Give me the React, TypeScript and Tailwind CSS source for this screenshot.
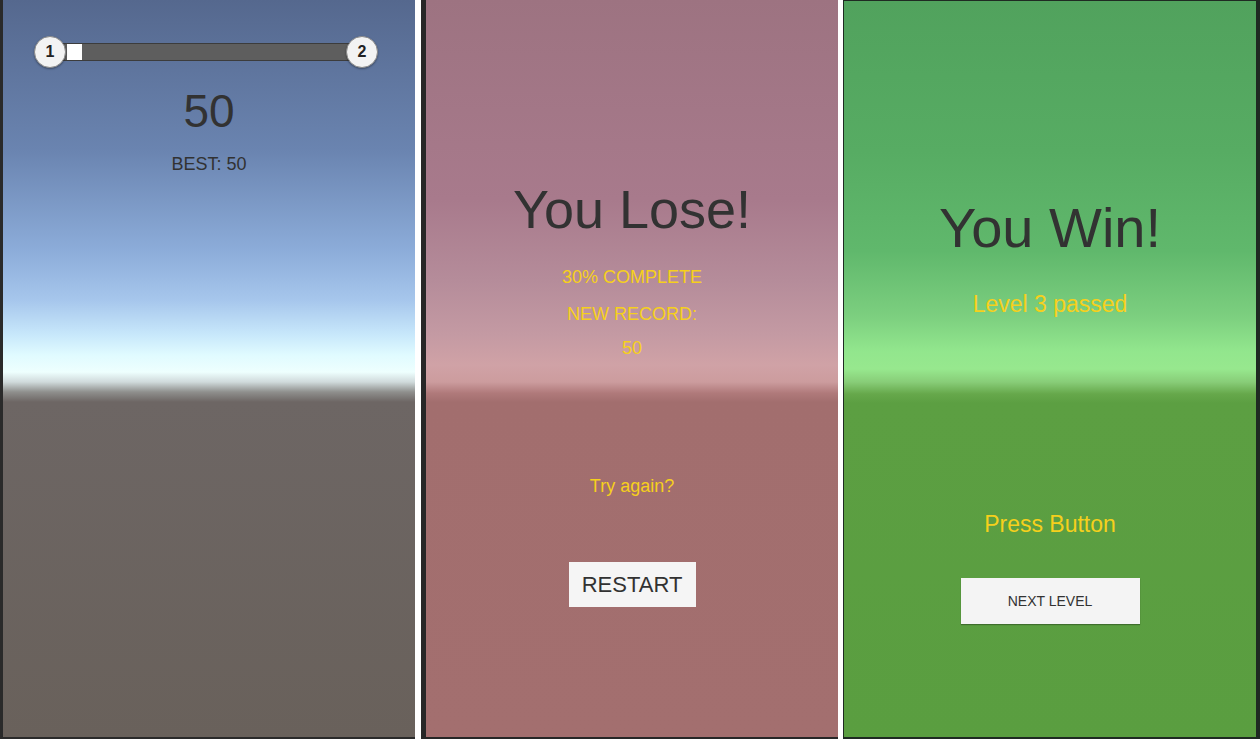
const font = { fontFamily: '"Liberation Sans", Arial, sans-serif' };

const StepCircle = ({ n }: { n: number }) => (
  <div className="relative z-10 flex h-8 w-8 shrink-0 items-center justify-center rounded-full border border-[#8a8a8a] bg-[#f3f3f3] text-[16px] font-bold leading-none text-[#222] shadow-[0_1px_2px_rgba(0,0,0,0.35)]">
    {n}
  </div>
);

const GamePanel = () => (
  <div className="flex h-[739px] w-[415px] shrink-0 flex-col border-b-2 border-l-[3px] border-[#2a2a2a] bg-[linear-gradient(to_bottom,#55688e_0px,#6a84b0_150px,#8cacd9_250px,#a6c6ec_300px,#c8e8fb_335px,#e0fbff_355px,#eefffe_372px,#d0dadb_382px,#8f8f8d_392px,#6d6664_402px,#69615b_739px)]">
    {/* level progress */}
    <div className="ml-[31px] mt-[36px] flex w-[344px] items-center">
      <StepCircle n={1} />
      <div className="-mx-4 flex h-[18px] flex-1 border border-[#3c3c3c] bg-[#5e5e5e]">
        <div className="ml-4 h-full w-[15px] bg-white" />
      </div>
      <StepCircle n={2} />
    </div>
    <div className="mt-[20px] text-center text-[46px] leading-none text-[#323232]">50</div>
    <div className="mt-[21px] text-center text-[18px] leading-none text-[#323232]">BEST: 50</div>
  </div>
);

const LosePanel = () => (
  <div className="flex h-[739px] w-[417px] shrink-0 flex-col items-center border-b-2 border-l-[5px] border-[#272727] bg-[linear-gradient(to_bottom,#9d7381_0px,#a87a8c_200px,#b58c9a_280px,#c49aa3_335px,#d0a2a6_365px,#cc9c9e_382px,#b07a7b_393px,#a26e6e_402px,#a36f6f_739px)]">
    <div className="mt-[182px] text-[54px] leading-none text-[#323232]">You Lose!</div>
    <div className="mt-[32px] text-[18px] leading-none text-[#f6d01c]">30% COMPLETE</div>
    <div className="mt-[19px] text-[18px] leading-none text-[#f6d01c]">NEW RECORD:</div>
    <div className="mt-[16px] text-[18px] leading-none text-[#f6d01c]">50</div>
    <div className="mt-[120px] text-[18px] leading-none text-[#f6d01c]">Try again?</div>
    <button className="mt-[67px] flex h-[45px] w-[127px] items-center justify-center bg-[#f5f5f5] text-[22px] leading-none text-[#323232]">
      RESTART
    </button>
  </div>
);

const WinPanel = () => (
  <div className="flex h-[739px] w-[417px] shrink-0 flex-col items-center border-b-2 border-l border-r-4 border-t border-[#1f2a22] bg-[linear-gradient(to_bottom,#51a25d_0px,#57ac63_150px,#60b86c_250px,#7ccf7f_315px,#92e68d_350px,#97e88e_368px,#88cd78_381px,#66a84b_393px,#5c9f42_402px,#5a9e40_739px)]">
    <div className="mt-[199px] text-[56px] leading-none text-[#323232]">You Win!</div>
    <div className="mt-[37px] text-[23px] leading-none text-[#f6d01c]">Level 3 passed</div>
    <div className="mt-[197px] text-[23px] leading-none text-[#f6d01c]">Press Button</div>
    <button className="mt-[42px] flex h-[46px] w-[179px] items-center justify-center bg-[#f4f4f4] text-[14px] leading-none text-[#323232] shadow-[0_1px_1px_rgba(0,0,0,0.3)]">
      NEXT LEVEL
    </button>
  </div>
);

export default function App() {
  return (
    <div className="flex h-[739px] w-[1260px] overflow-hidden bg-white" style={font}>
      <GamePanel />
      <div className="w-[6px] shrink-0" />
      <LosePanel />
      <div className="w-[5px] shrink-0" />
      <WinPanel />
    </div>
  );
}
